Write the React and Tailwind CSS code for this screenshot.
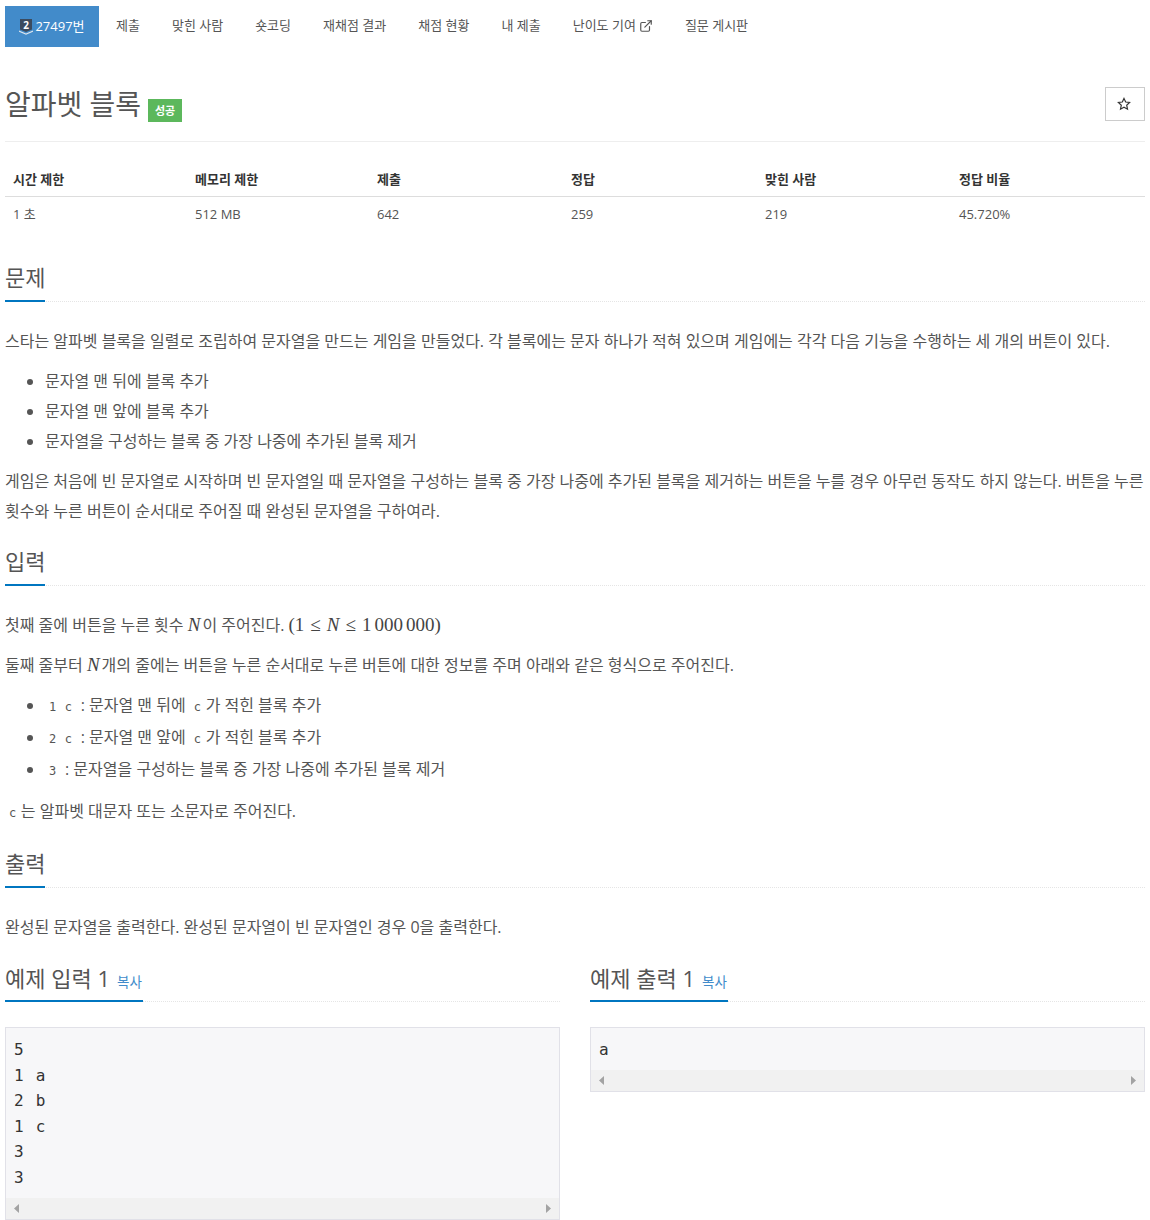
import { ExternalLink } from "lucide-react";

const sans = "font-['Open_Sans','Noto_Sans_CJK_KR',sans-serif]";

const tabs = ["제출", "맞힌 사람", "숏코딩", "재채점 결과", "채점 현황", "내 제출"];

const TierIcon = () => (
  <svg width="14" height="16" viewBox="0 0 14 16" className="mr-[2px]">
    <path d="M1 0h12v10.5l-6 2.5-6-2.5z" fill="#3b4b5f" />
    <path d="M0 11.5l7 3 7-3v1.2l-7 3-7-3z" fill="#dfe6ee" />
    <text x="7" y="10" textAnchor="middle" fontSize="10" fontWeight="700" fill="#fff" fontFamily="Open Sans">
      2
    </text>
  </svg>
);

const SectionTitle = ({ children }) => (
  <div className="border-b border-dotted border-[#e5e5e5] h-[38px]">
    <h2 className="inline-block h-[38px] border-b-2 border-[#0076c0] text-[22px] leading-[26px] text-[#555]">
      {children}
    </h2>
  </div>
);

const Code = ({ children }) => (
  <code className="font-['DejaVu_Sans_Mono',monospace] text-[12px] leading-none tracking-[0.6px] text-[#555] mx-[4px]">
    {children}
  </code>
);

const Nvar = () => (
  <i className="font-['Liberation_Serif',serif] text-[19px] leading-none text-[#444] pr-[2px]">N</i>
);

const Le = () => <span className="mx-[6px]">≤</span>;

const ScrollBar = () => (
  <div className="h-[21px] bg-[#f1f1f1] flex items-center justify-between px-[8px]">
    <svg width="6" height="9" viewBox="0 0 6 9">
      <path d="M5 0v9L0 4.5z" fill="#a3a3a3" />
    </svg>
    <svg width="6" height="9" viewBox="0 0 6 9">
      <path d="M1 0v9l5-4.5z" fill="#a3a3a3" />
    </svg>
  </div>
);

const Sample = ({ title, lines }) => (
  <div className="w-[555px]">
    <div className="border-b border-dotted border-[#e5e5e5] h-[37px]">
      <div className="inline-flex items-baseline h-[37px] border-b-2 border-[#0076c0] text-[22px] leading-[26px] text-[#555]">
        {title}
        <a className="text-[13.5px] text-[#428bca] ml-[7px] mr-[1px]">복사</a>
      </div>
    </div>
    <div className="mt-[25px] border border-[#e1e1e8] bg-[#f7f7f9]">
      <pre className="font-['DejaVu_Sans_Mono',monospace] text-[16px] tracking-[1.2px] leading-[25.6px] text-[#333] pt-[9px] pb-[7px] px-[8px] m-0">
        {lines.join("\n")}
      </pre>
      <ScrollBar />
    </div>
  </div>
);

export default function App() {
  return (
    <div className={`${sans} w-[1150px] h-[1220px] overflow-hidden bg-white px-[5px] pt-[6px] text-[#555]`}>
      <nav className="flex items-center h-[41px] text-[13px]">
        <a className="flex items-center h-[41px] w-[94px] justify-center bg-[#428bca] text-white text-[13px]">
          <TierIcon />
          27497번
        </a>
        <div className="flex items-center gap-[32px] ml-[17px] pb-[1px]">
          {tabs.map((t) => (
            <a key={t}>{t}</a>
          ))}
          <a className="flex items-center gap-[3px]">
            난이도 기여
            <ExternalLink size={14} strokeWidth={2} />
          </a>
          <a>질문 게시판</a>
        </div>
      </nav>

      <div className="flex items-center justify-between mt-[37px] h-[40px]">
        <h1 className="flex items-center text-[28px] leading-[40px] text-[#555]">
          알파벳 블록
          <span className="ml-[7px] mt-[13px] w-[34px] h-[23px] bg-[#5cb85c] text-white text-[11px] font-bold flex items-center justify-center">
            성공
          </span>
        </h1>
        <button className="w-[40px] h-[34px] border border-[#ccc] flex items-center justify-center pr-[2px] text-[#333]">
          <svg width="14" height="14" viewBox="0 0 24 24" fill="none" stroke="#333" strokeWidth="2">
            <path d="M12 2.5l2.9 6.2 6.7.8-5 4.6 1.4 6.7-6-3.4-6 3.4 1.4-6.7-5-4.6 6.7-.8z" />
          </svg>
        </button>
      </div>
      <div className="border-b border-[#eee] mt-[17px]" />

      <table className="w-full mt-[23px] text-[13px] table-fixed">
        <thead>
          <tr className="border-b border-[#ddd] h-[31px] text-left text-[#333]">
            <th className="w-[182px] pl-[8px] pb-[2px] font-bold">시간 제한</th>
            <th className="w-[182px] pl-[8px] pb-[2px] font-bold">메모리 제한</th>
            <th className="w-[194px] pl-[8px] pb-[2px] font-bold">제출</th>
            <th className="w-[194px] pl-[8px] pb-[2px] font-bold">정답</th>
            <th className="w-[194px] pl-[8px] pb-[2px] font-bold">맞힌 사람</th>
            <th className="pl-[8px] pb-[2px] font-bold">정답 비율</th>
          </tr>
        </thead>
        <tbody>
          <tr className="h-[37px]">
            <td className="pl-[8px]">1 초</td>
            <td className="pl-[8px]">512 MB</td>
            <td className="pl-[8px]">642</td>
            <td className="pl-[8px]">259</td>
            <td className="pl-[8px]">219</td>
            <td className="pl-[8px]">45.720%</td>
          </tr>
        </tbody>
      </table>

      <section className="mt-[31px] text-[16px]">
        <SectionTitle>문제</SectionTitle>
        <p className="mt-[24px] leading-[30px]">
          스타는 알파벳 블록을 일렬로 조립하여 문자열을 만드는 게임을 만들었다. 각 블록에는 문자 하나가 적혀 있으며 게임에는 각각 다음 기능을 수행하는 세 개의 버튼이 있다.
        </p>
        <ul className="list-disc pl-[40px] mt-[10px] leading-[30px]">
          <li>문자열 맨 뒤에 블록 추가</li>
          <li>문자열 맨 앞에 블록 추가</li>
          <li>문자열을 구성하는 블록 중 가장 나중에 추가된 블록 제거</li>
        </ul>
        <p className="mt-[10px] leading-[30px]">
          게임은 처음에 빈 문자열로 시작하며 빈 문자열일 때 문자열을 구성하는 블록 중 가장 나중에 추가된 블록을 제거하는 버튼을 누를 경우 아무런 동작도 하지 않는다. 버튼을 누른 횟수와 누른 버튼이 순서대로 주어질 때 완성된 문자열을 구하여라.
        </p>
      </section>

      <section className="mt-[22px] text-[16px]">
        <SectionTitle>입력</SectionTitle>
        <p className="mt-[24px] leading-[30px]">
          첫째 줄에 버튼을 누른 횟수 <Nvar />이 주어진다.{" "}
          <span className="font-['Liberation_Serif',serif] text-[19px] leading-none text-[#444]">
            (1
            <Le />
            <i>N</i>
            <Le />1<span className="ml-[3px]">000</span>
            <span className="ml-[3px]">000</span>)
          </span>
        </p>
        <p className="mt-[10px] leading-[30px]">
          둘째 줄부터 <Nvar />개의 줄에는 버튼을 누른 순서대로 누른 버튼에 대한 정보를 주며 아래와 같은 형식으로 주어진다.
        </p>
        <ul className="list-disc pl-[40px] mt-[9px] leading-[32px]">
          <li className="h-[32px]">
            <Code>1 c</Code> : 문자열 맨 뒤에 <Code>c</Code>가 적힌 블록 추가
          </li>
          <li className="h-[32px]">
            <Code>2 c</Code> : 문자열 맨 앞에 <Code>c</Code>가 적힌 블록 추가
          </li>
          <li className="h-[32px]">
            <Code>3</Code> : 문자열을 구성하는 블록 중 가장 나중에 추가된 블록 제거
          </li>
        </ul>
        <p className="mt-[11px] leading-[30px]">
          <Code>c</Code>는 알파벳 대문자 또는 소문자로 주어진다.
        </p>
      </section>

      <section className="mt-[24px] text-[16px]">
        <SectionTitle>출력</SectionTitle>
        <p className="mt-[24px] leading-[30px]">완성된 문자열을 출력한다. 완성된 문자열이 빈 문자열인 경우 0을 출력한다.</p>
      </section>

      <div className="flex gap-[30px] mt-[23px]">
        <Sample title="예제 입력 1" lines={["5", "1 a", "2 b", "1 c", "3", "3"]} />
        <Sample title="예제 출력 1" lines={["a"]} />
      </div>
    </div>
  );
}
